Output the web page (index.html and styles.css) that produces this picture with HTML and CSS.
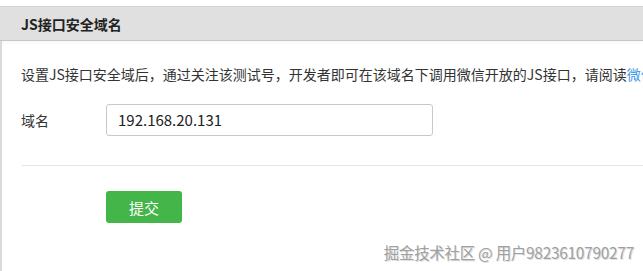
FILE: index.html
```html
<!DOCTYPE html>
<html lang="zh">
<head>
<meta charset="utf-8">
<link rel="stylesheet" href="styles.css">
</head>
<body>
<div class="page">
  <div class="panel-hd"><h3 class="panel-title">JS接口安全域名</h3></div>
  <div class="panel-bd">
    <p class="desc">设置JS接口安全域后，通过关注该测试号，开发者即可在该域名下调用微信开放的JS接口，请阅读<a class="link">微信JSSDK开发文档</a>。</p>
    <div class="form-row">
      <label class="form-label">域名</label>
      <div class="input-box">192.168.20.131</div>
    </div>
    <div class="divider"></div>
    <div class="tool-bar">
      <button class="btn-green">提交</button>
    </div>
  </div>
  <div class="watermark">掘金技术社区 @ 用户9823610790277</div>
</div>
</body>
</html>
```
FILE: styles.css
```css
html, body {
  margin: 0;
  padding: 0;
  background: #fff;
  overflow: hidden;
}
body {
  width: 643px;
  height: 271px;
  font-family: "Noto Sans CJK SC", "Microsoft YaHei", sans-serif;
  color: #333;
}
.page {
  position: relative;
  height: 271px;
  padding-top: 6px;
  box-sizing: border-box;
}
.panel-hd {
  height: 33px;
  background: #e0e0e0;
  border-top: 1px solid #d2d2d2;
  border-bottom: 1px solid #c6c6c6;
  box-shadow: 0 2px 3px rgba(0,0,0,0.03);
  padding-left: 21px;
  display: flex;
  align-items: center;
}
.panel-title {
  margin: 0;
  font-size: 14px;
  font-weight: bold;
  color: #222;
  line-height: 20px;
}
.panel-bd {
  border-left: 2px solid #dadada;
  padding-left: 19px;
  padding-top: 23px;
  height: 230px;
  box-sizing: border-box;
}
.desc {
  margin: 0;
  font-size: 14px;
  line-height: 20px;
  white-space: nowrap;
  overflow: hidden;
  color: #333;
}
.link {
  color: #459ae9;
}
.form-row {
  display: flex;
  align-items: center;
  margin-top: 20px;
}
.form-label {
  width: 85px;
  font-size: 14px;
  line-height: 20px;
}
.input-box {
  width: 327px;
  height: 32px;
  box-sizing: border-box;
  border: 1px solid #c8c8c8;
  border-radius: 3px;
  padding-left: 11px;
  font-size: 15px;
  line-height: 30px;
  color: #222;
}
.divider {
  margin-top: 29px;
  height: 1px;
  background: #e4e4e4;
  margin-left: 1px;
}
.tool-bar {
  padding-left: 85px;
  padding-top: 25px;
}
.btn-green {
  width: 76px;
  height: 32px;
  border: 0;
  border-radius: 3px;
  background: #44b549;
  color: #fff;
  font-family: "Noto Sans CJK SC", sans-serif;
  font-size: 15px;
  padding: 0;
}
.watermark {
  position: absolute;
  right: 9px;
  bottom: 9px;
  font-size: 15.5px;
  line-height: 20px;
  color: #a0a0a0;
  text-shadow: 1px 1px 0 #e2e2e2;
  letter-spacing: -0.3px;
}
```
